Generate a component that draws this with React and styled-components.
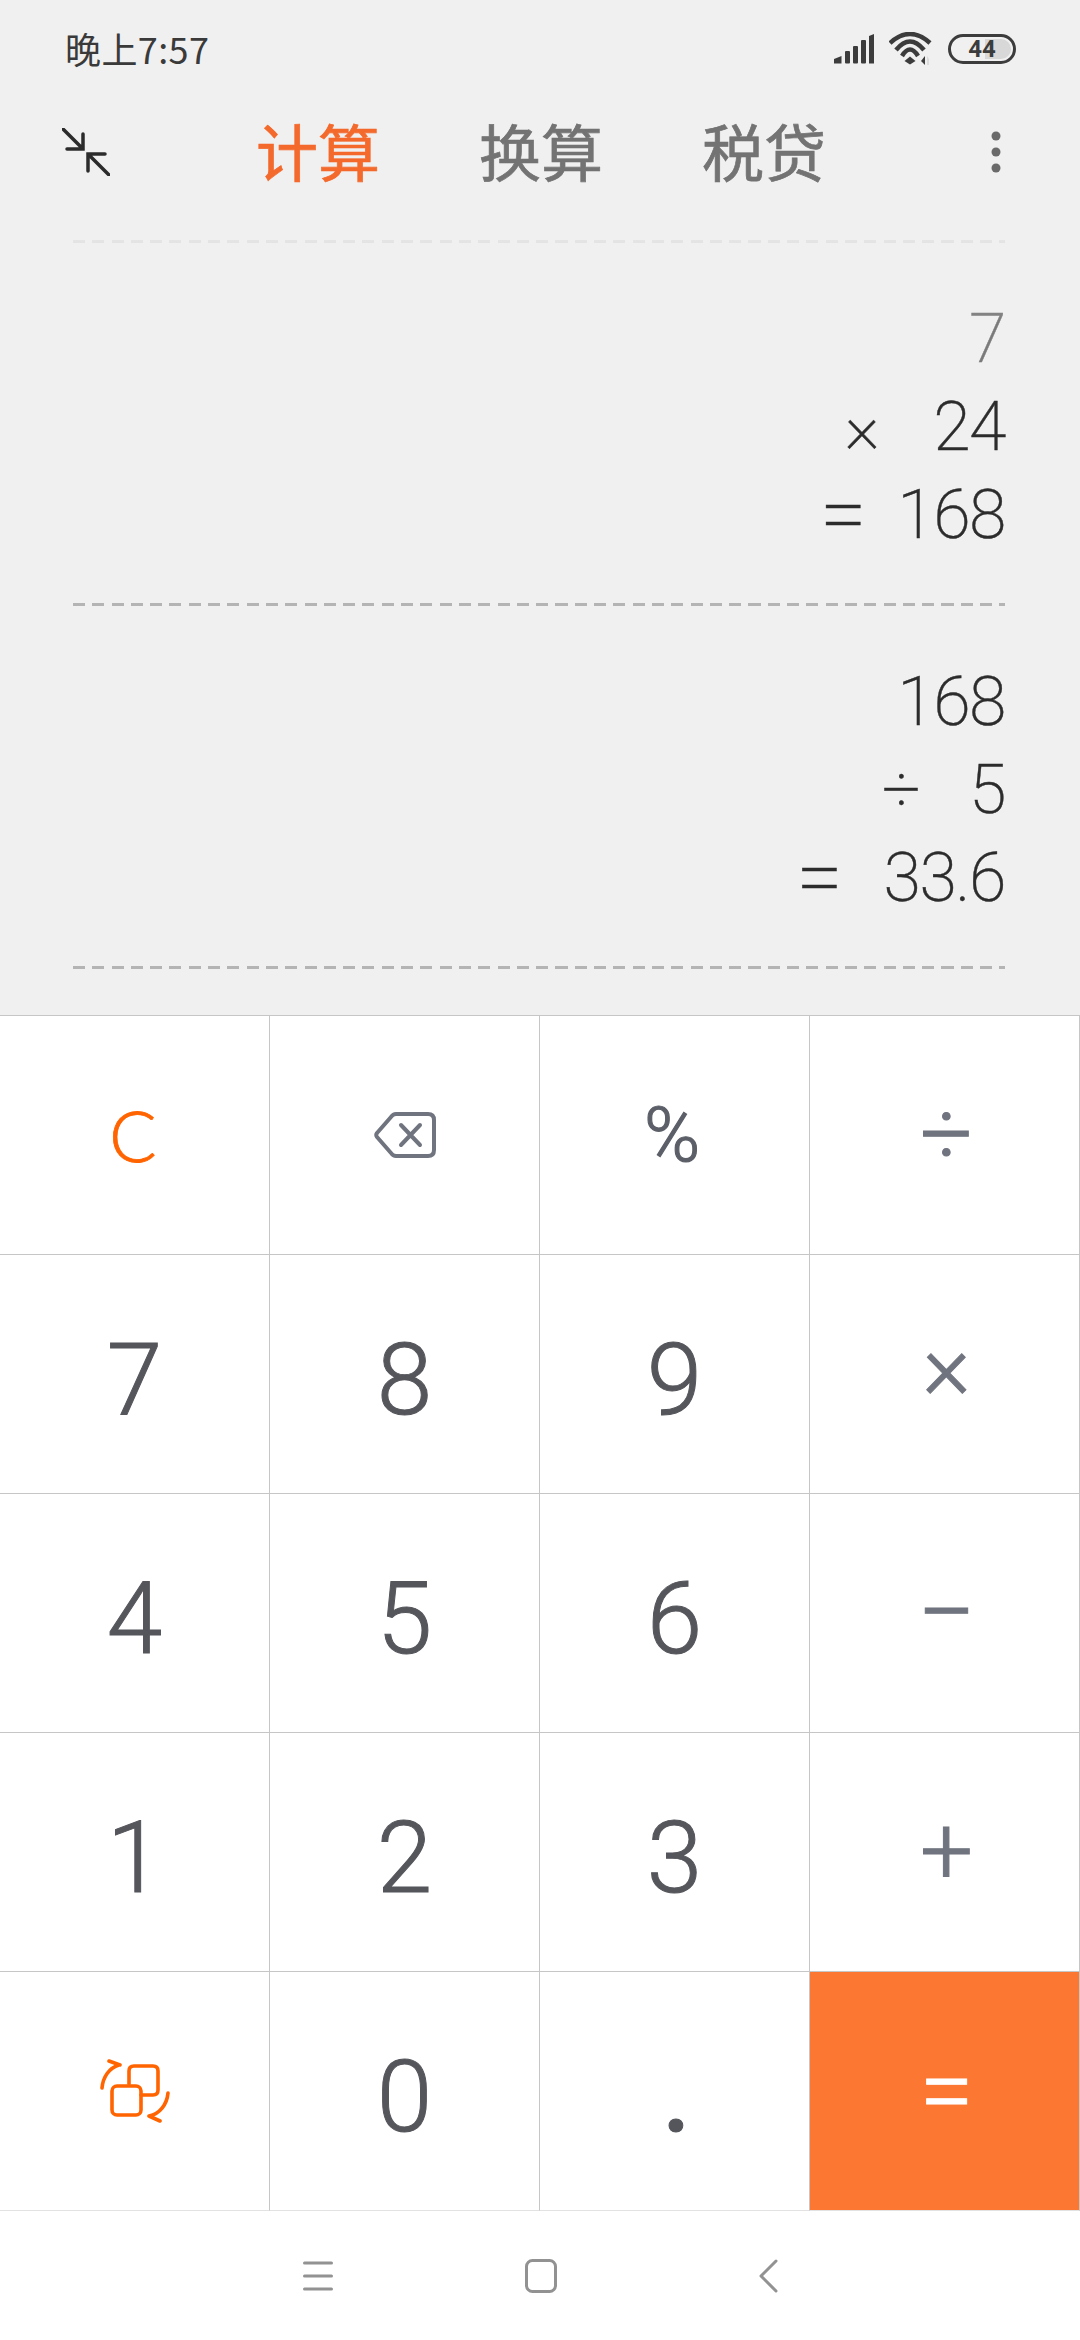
import React from 'react'
import styled, { createGlobalStyle } from 'styled-components'

const Global = createGlobalStyle`
  html, body { margin: 0; padding: 0; background: #f0f0f0; }
  * { box-sizing: border-box; }
`
const Page = styled.div`
  width: 1080px;
  height: 2340px;
  display: flex;
  flex-direction: column;
  overflow: hidden;
  background: #f0f0f0;
  font-family: Roboto, "Noto Sans CJK SC", sans-serif;
`
const StatusBar = styled.div`
  height: 102px;
  flex: none;
  display: flex;
  align-items: center;
  justify-content: space-between;
  padding: 0 64px 4px 65px;
`
const Time = styled.span`
  font-family: "Noto Sans CJK SC", sans-serif;
  font-size: 36px;
  color: #3a3a3a;
  letter-spacing: 0.4px;
  margin-bottom: 2px;
`
const StatusIcons = styled.div`
  display: flex;
  align-items: center;
  gap: 15px;
`
const Battery = styled.div`
  position: relative;
  width: 68px;
  height: 30px;
  border: 3.5px solid #3c3c3c;
  border-radius: 15px;
  display: flex;
  align-items: center;
  justify-content: center;
  font-size: 24px;
  font-weight: 700;
  color: #3c3c3c;
  &::before {
    content: '';
    position: absolute;
    left: 34px;
    right: 2px;
    top: 2px;
    bottom: 2px;
    border-radius: 0 10px 10px 0;
    background: #d8d8d8;
  }
`
const BatteryValue = styled.span`
  position: relative;
  line-height: 1;
`
const TabBar = styled.div`
  height: 100px;
  flex: none;
  display: flex;
  align-items: center;
  padding: 0 79px 0 62px;
`
const Tabs = styled.div`
  display: flex;
  gap: 99px;
  margin: 0 0 4px 146px;
  flex: 1;
`
const Tab = styled.span`
  font-family: "Noto Sans CJK SC", sans-serif;
  font-size: 62px;
  font-weight: 400;
  line-height: 1;
  -webkit-text-stroke: 0.7px currentColor;
  color: ${p => (p.$active ? '#f4692c' : '#737373')};
`
const History = styled.div`
  flex: 1;
  position: relative;
  padding: 38px 75px 0 73px;
  &::after {
    content: '';
    position: absolute;
    left: 0;
    right: 0;
    top: 0;
    height: 120px;
    background: linear-gradient(rgba(240, 240, 240, 0.95) 20%, rgba(240, 240, 240, 0));
  }
`
const Dashed = styled.div`
  height: 3px;
  background: repeating-linear-gradient(90deg, #b4b4b4 0 12px, transparent 12px 19.3px);
`
const Entry = styled.div`
  padding: 52px 0 44px;
`
const Line = styled.div`
  height: 88px;
  display: flex;
  justify-content: flex-end;
  align-items: center;
  font-size: 68px;
  font-weight: 200;
  letter-spacing: -1.5px;
  -webkit-text-stroke: 0.4px currentColor;
  color: ${p => (p.$muted ? '#7a7a7a' : '#2c2c2c')};
`
const Operator = styled.span`
  font-size: ${p => (p.$wide ? 84 : 68)}px;
  line-height: 1;
  margin-right: ${p => p.$gap}px;
`
const Keypad = styled.div`
  flex: none;
  display: grid;
  grid-template-columns: repeat(4, 270px);
  grid-auto-rows: 239px;
  background: #fff;
  border-top: 1px solid #c6c6c6;
`
const Key = styled.div`
  display: flex;
  align-items: center;
  justify-content: center;
  border-right: 1px solid #c6c6c6;
  border-bottom: 1px solid ${p => (p.$last ? '#e2e2e2' : '#c6c6c6')};
  background: ${p => (p.$accent ? '#fc7731' : '#fff')};
  color: ${p => (p.$accent ? '#fff' : '#55565c')};
`
const Digit = styled.span`
  font-size: 100px;
  font-weight: 300;
  line-height: 1;
  padding-top: 12px;
  -webkit-text-stroke: 1px currentColor;
`
const Dot = styled(Digit)`
  font-weight: 500;
  margin-left: 4px;
`
const Clear = styled.span`
  font-family: Lato, sans-serif;
  font-size: 70px;
  font-weight: 300;
  line-height: 1;
  margin-right: 3px;
  -webkit-text-stroke: 0.8px currentColor;
  color: #ff6400;
`
const Percent = styled.span`
  font-size: 76px;
  font-weight: 300;
  line-height: 1;
  margin-right: 5px;
  -webkit-text-stroke: 1.2px currentColor;
  color: #5c5f68;
`
const Sign = styled.span`
  font-size: ${p => p.$size}px;
  font-weight: 300;
  line-height: 1;
  margin: ${p => p.$shift || 0}px 0 0 4px;
  -webkit-text-stroke: 1px currentColor;
  color: ${p => (p.$light ? '#fff' : '#70747f')};
`
const NavBar = styled.div`
  flex: none;
  height: 129px;
  background: #fff;
  display: flex;
  align-items: center;
  justify-content: center;
  gap: 192px;
`
const BackSlot = styled.div`
  display: flex;
  margin-left: 9px;
`

const Signal = () => (
  <svg width="40" height="30" viewBox="0 0 40 30" fill="#3c3c3c">
    <path d="M0 25 7.500 22v7.500H0z" />
    <rect x="11" y="17" width="5" height="12.500" rx="1" />
    <rect x="19" y="12" width="5" height="17.500" rx="1" />
    <rect x="27" y="6" width="5" height="23.500" rx="1" />
    <path d="M35 2 40 0v29.500h-5z" />
  </svg>
)

const Wifi = () => (
  <svg width="44" height="34" viewBox="0 0 44 34" fill="none">
    <g stroke="#3c3c3c" strokeWidth="4.500">
      <path d="M1 11Q21 -7 41 11" />
      <path d="M7 18Q21 1 35 18" />
      <path d="M13 24Q21 11 29 24" />
    </g>
    <path d="M21 24.500 26.500 29 21 32.500 15.500 29z" fill="#3c3c3c" />
    <path d="M36 24v9l-4-4z" fill="#3c3c3c" />
    <path d="M38 24v9h2v-6z" fill="#dcdcdc" />
  </svg>
)

const Collapse = () => (
  <svg width="48" height="48" viewBox="0 0 48 48" fill="none" stroke="#2b2b2b" strokeWidth="3.500" strokeLinecap="round">
    <path d="M1 1 21 21M21 6V21H5" />
    <path d="M47 47 26 26M26 43V26H43" />
  </svg>
)

const Backspace = () => (
  <svg width="62" height="46" viewBox="0 0 62 46" fill="none" stroke="#70747f" strokeWidth="4" strokeLinecap="round" strokeLinejoin="round">
    <path d="M22 2H54Q60 2 60 8V38Q60 44 54 44H22Q19 44 17 41L3 25Q1.500 23 3 21L17 5Q19 2 22 2Z" />
    <path d="M27 13 46 33M46 13 27 33" />
  </svg>
)

const Swap = () => (
  <svg width="70" height="64" viewBox="0 0 70 64" fill="none" stroke="#ff6400" strokeWidth="3.600" strokeLinecap="round" strokeLinejoin="round">
    <path d="M29 25V12Q29 7 34 7H53Q58 7 58 12V31Q58 36 53 36H41" />
    <rect x="12" y="27" width="29" height="29" rx="5" />
    <path d="M2 29C3 18 9 9 19 6M9 2 20 6 " />
    <path d="M68 34C67 45 60 55 49 57M60 62 49 57" />
  </svg>
)

const Menu = () => (
  <svg width="30" height="30" viewBox="0 0 30 30" stroke="#929292" strokeWidth="3" strokeLinecap="round">
    <path d="M1.500 2H28.500M1.500 15H28.500M1.500 28H28.500" />
  </svg>
)

const Home = () => (
  <svg width="32" height="34" viewBox="0 0 32 34" fill="none" stroke="#929292" strokeWidth="3">
    <rect x="1.500" y="1.500" width="29" height="31" rx="6" />
  </svg>
)

const Back = () => (
  <svg width="20" height="34" viewBox="0 0 20 34" fill="none" stroke="#929292" strokeWidth="3" strokeLinecap="round" strokeLinejoin="round">
    <path d="M18 2 3 17 18 32" />
  </svg>
)

const entries = [
  [{ value: '7', muted: true }, { op: '×', gap: 55, value: '24' }, { op: '=', wide: true, gap: 32, value: '168' }],
  [{ value: '168' }, { op: '÷', gap: 50, value: '5' }, { op: '=', wide: true, gap: 42, value: '33.6' }],
]

const keys = [
  { node: <Clear>C</Clear> },
  { node: <Backspace /> },
  { node: <Percent>%</Percent> },
  { node: <Sign $size={92} $shift={-2}>÷</Sign> },
  { node: <Digit>7</Digit> },
  { node: <Digit>8</Digit> },
  { node: <Digit>9</Digit> },
  { node: <Sign $size={92} $shift={-14}>×</Sign> },
  { node: <Digit>4</Digit> },
  { node: <Digit>5</Digit> },
  { node: <Digit>6</Digit> },
  { node: <Sign $size={104}>−</Sign> },
  { node: <Digit>1</Digit> },
  { node: <Digit>2</Digit> },
  { node: <Digit>3</Digit> },
  { node: <Sign $size={94} $shift={-2}>+</Sign> },
  { node: <Swap /> },
  { node: <Digit>0</Digit> },
  { node: <Dot>.</Dot> },
  { node: <Sign $size={98} $light>=</Sign>, accent: true },
]

const App = () => (
  <Page>
    <Global />
    <StatusBar>
      <Time>晚上7:57</Time>
      <StatusIcons>
        <Signal />
        <Wifi />
        <Battery>
          <BatteryValue>44</BatteryValue>
        </Battery>
      </StatusIcons>
    </StatusBar>
    <TabBar>
      <Collapse />
      <Tabs>
        <Tab $active>计算</Tab>
        <Tab>换算</Tab>
        <Tab>税贷</Tab>
      </Tabs>
      <svg width="10" height="42" viewBox="0 0 10 42" fill="#6a6a6a">
        <circle cx="5" cy="5" r="4.500" />
        <circle cx="5" cy="21" r="4.500" />
        <circle cx="5" cy="37" r="4.500" />
      </svg>
    </TabBar>
    <History>
      <Dashed />
      {entries.map((entry, i) => (
        <div key={i}>
          <Entry>
            {entry.map((line, j) => (
              <Line key={j} $muted={line.muted}>
                {line.op && <Operator $wide={line.wide} $gap={line.gap}>{line.op}</Operator>}
                {line.value}
              </Line>
            ))}
          </Entry>
          <Dashed />
        </div>
      ))}
    </History>
    <Keypad>
      {keys.map((k, i) => (
        <Key key={i} $accent={k.accent} $last={i >= 16}>
          {k.node}
        </Key>
      ))}
    </Keypad>
    <NavBar>
      <Menu />
      <Home />
      <BackSlot>
        <Back />
      </BackSlot>
    </NavBar>
  </Page>
)

export default App
